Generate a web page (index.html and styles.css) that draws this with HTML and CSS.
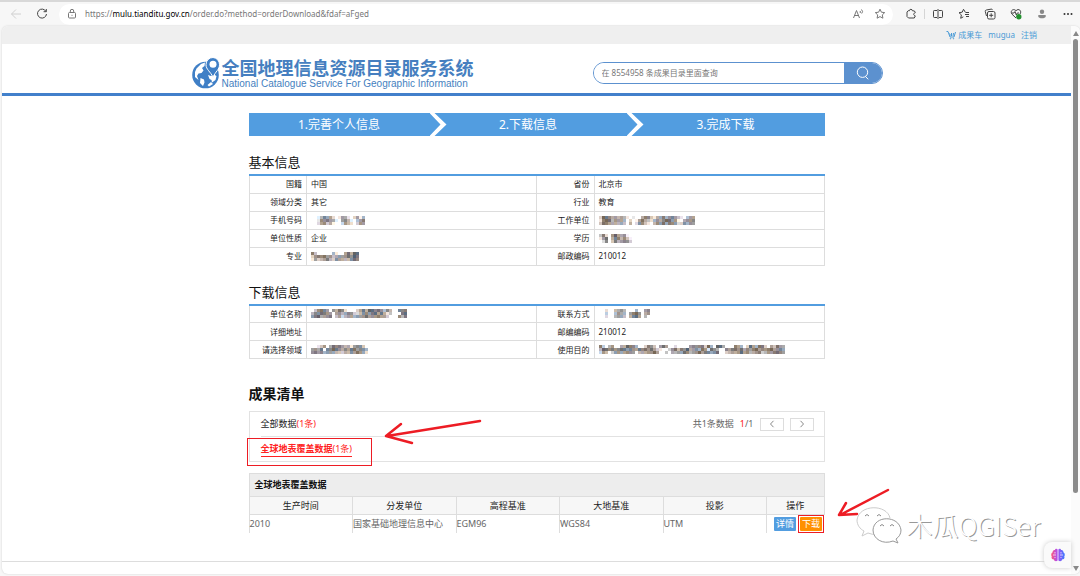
FILE: index.html
```html
<!DOCTYPE html>
<html lang="zh-CN">
<head>
<meta charset="utf-8">
<title>全国地理信息资源目录服务系统</title>
<link rel="stylesheet" href="styles.css">
</head>
<body>
<div class="browser">
  <div class="toolbar">
    <button class="tool" aria-label="Back"><svg width="12" height="12" viewBox="0 0 12 12" class="line faint"><path d="M11 6H1.500M6 1.500L1.500 6L6 10.500"/></svg></button>
    <button class="tool reload" aria-label="Reload"><svg width="12" height="12" viewBox="0 0 12 12" class="line"><path d="M10 3.500A4.500 4.500 0 1 0 10.500 6M10.300 1v2.700H7.600"/></svg></button>
    <div class="address">
      <svg width="10" height="10" viewBox="0 0 10 10" class="line gray"><rect x="1.500" y="3.500" width="7" height="5.500" rx="1"/><path d="M3.300 3.500V2a1.700 1.700 0 0 1 3.400 0v1.500"/><path d="M5 5.800v1"/></svg>
      <div class="url" role="textbox" aria-label="Address">https://<b>mulu.tianditu.gov.cn</b>/order.do?method=orderDownload&amp;fdaf=aFged</div>
      <button class="tool" aria-label="Read aloud"><svg width="12" height="12" viewBox="0 0 12 12" class="line gray"><path d="M1.500 10L4.500 2.500L7.500 10M2.500 7.500h4M8 3q1 1 0 2M9.500 1.500q2 2 .2 4"/></svg></button>
      <button class="tool" aria-label="Favorite"><svg width="12" height="12" viewBox="0 0 12 12" class="line gray"><path d="M6 1.200l1.400 3 3.300.4-2.400 2.300.6 3.300L6 8.600l-2.900 1.600.6-3.300L1.300 4.600l3.300-.4z"/></svg></button>
    </div>
    <div class="tools">
      <button class="tool" aria-label="Extensions"><svg width="12" height="12" viewBox="0 0 12 12" class="line"><path d="M4.500 2.700a1.400 1.400 0 0 1 2.800 0L9.500 3l.8 1.700-1 .5a1.300 1.300 0 0 0 0 2.200l1 .5L9.300 10H3.500L2 8.500V4l1.200-1.300z"/></svg></button>
      <span class="split"></span>
      <button class="tool" aria-label="Split screen"><svg width="12" height="12" viewBox="0 0 12 12" class="line"><path d="M5 2.500H2.300a.8.8 0 0 0-.8.800v5.400c0 .5.300.8.800.8H5M7 2.500h2.700c.5 0 .8.300.8.800v5.400c0 .5-.3.800-.8.800H7M6 1v10"/></svg></button>
      <button class="tool" aria-label="Favorites"><svg width="12" height="12" viewBox="0 0 12 12" class="line"><path d="M7.300 4.200L5.500 1.300 4.200 4.200 1 4.700l2.400 2.200-.7 3.400 2.600-1.500M7.500 4.500H11M7 6.500h4M8 8.500h3"/></svg></button>
      <button class="tool" aria-label="Collections"><svg width="12" height="12" viewBox="0 0 12 12" class="line"><rect x="3.500" y="3.500" width="7.500" height="7.500" rx="1.500"/><path d="M2.500 8L1.300 3.500q-.3-1.200 1-1.500l5-.9q1 0 1.200 1M7.200 5.300v4M5.200 7.300h4"/></svg></button>
      <button class="tool" aria-label="Browser essentials"><svg width="12" height="12" viewBox="0 0 12 12" class="line"><path d="M6 10L2 6.200C-.5 3.200 3.500-.3 6 2.800 8.500-.3 12.300 3 10 6M2 5h2l1-1.500L6.300 7l1-2H9"/><circle cx="8.800" cy="8.700" r="2.700" class="ok"/></svg></button>
      <button class="tool" aria-label="Profile"><svg width="12" height="12" viewBox="0 0 12 12" class="person"><circle cx="6" cy="3.700" r="2.200"/><path d="M2.300 7h7.400v1.200C9.700 11 2.300 11 2.300 8.200z"/></svg></button>
      <button class="tool" aria-label="Menu"><svg width="12" height="12" viewBox="0 0 12 12" class="dots"><circle cx="2.500" cy="6" r="1"/><circle cx="6" cy="6" r="1"/><circle cx="9.500" cy="6" r="1"/></svg></button>
    </div>
  </div>

  <div class="window">
    <div class="page">
      <nav class="topbar">
        <a href="#cart"><svg width="10" height="10" viewBox="0 0 10 10" class="cart"><path d="M.5 1.500H2L4 7h4l1.500-5M3.500 3.500l1 2M5.500 3v3M7.500 3L7 6"/><circle cx="4.500" cy="8.700" r=".3"/><circle cx="7.500" cy="8.700" r=".3"/></svg>成果车</a>
        <a href="#user">mugua</a>
        <a href="#logout">注销</a>
      </nav>
      <header class="header">
        <div class="masthead">
          <a class="logo" href="#home">
            <svg width="28" height="32" viewBox="0 0 28 32">
              <circle cx="13.500" cy="18" r="13.300" fill="#3f7fc6"/>
              <path d="M4.500 11.500L9 7l4-1.500-.5 3.500L10 11l1.500 2.500-2 2.500-3 .5L5 19l1.500 4L3 20v-5zM16 18l3 1 3-1.500 2.500 1.500-1 4-3.500 2.500-.5-2.500-2-1zM8.500 21l3.500 1.500.5 3-1.500 3.500-3-3zM21 27l-4 2.500-1.500-1.500L19 25z" fill="#fff"/>
              <path d="M21 .5a7 7 0 0 1 6.500 7.200c0 4.800-4 7-6.500 12.300C18.500 14.700 14 12.500 14 7.700A7 7 0 0 1 21 .5z" fill="#3f7fc6" stroke="#fff" stroke-width="1"/>
              <circle cx="21" cy="7.300" r="3.500" fill="#fff"/>
            </svg>
            <span class="names"><strong>全国地理信息资源目录服务系统</strong><span>National Catalogue Service For Geographic Information</span></span>
          </a>
          <form class="search">
            <input type="text" aria-label="查询" placeholder="在 8554958 条成果目录里面查询">
            <button type="button" aria-label="搜索"><svg width="14" height="14" viewBox="0 0 14 14"><circle cx="6.500" cy="6.200" r="5.200"/><path d="M9.500 10.500l2.700 2.800"/></svg></button>
          </form>
        </div>
      </header>

      <main class="content">
        <ol class="steps">
          <li>1.完善个人信息</li>
          <li>2.下载信息</li>
          <li>3.完成下载</li>
        </ol>

        <h2>基本信息</h2>
        <table class="info">
          <tr><th>国籍</th><td>中国</td><th>省份</th><td>北京市</td></tr>
          <tr><th>领域分类</th><td>其它</td><th>行业</th><td>教育</td></tr>
          <tr><th>手机号码</th><td><svg class="mosaic" data-rows="0016a7830287204816,002a9b87108a61058b,0038a4710039630498"></svg></td><th>工作单位</th><td><svg class="mosaic" data-rows="4dba78686202007ba5277b69a8520588,2bdc6988604018c753697adc8910799a,5cb87767507039a5206a8c7ba8349698"></svg></td></tr>
          <tr><th>单位性质</th><td>企业</td><th>学历</th><td><svg class="mosaic" data-rows="5b309d87910,28c07ab6a51,03a05b68a94"></svg></td></tr>
          <tr><th>专业</th><td><svg class="mosaic" data-rows="b50000062008c7dc,49bac8957889c9db,28468b64987669ca"></svg></td><th>邮政编码</th><td>210012</td></tr>
        </table>

        <h2>下载信息</h2>
        <table class="info">
          <tr><th>单位名称</th><td><svg class="mosaic" data-rows="05aca8097ca300048b7dcac95a600aab,6a9cb9808967a94369a8bc8b725000bc,8bd789b05836886889c899b884000a6b"></svg></td><th>联系方式</th><td><svg class="mosaic" data-rows="0030067960006008a0,00400597608bd90790,00300687507ac80600"></svg></td></tr>
          <tr><th>详细地址</th><td></td><th>邮编编码</th><td>210012</td></tr>
          <tr><th>请选择领域</th><td><svg class="mosaic" data-rows="0025907cab86728a950,897b0aadb97a8bc8a96,9b8a68876547698c973"></svg></td><th>使用目的</th><td><svg class="mosaic" data-rows="b40690077dba6004b9508c800300008a9ab4d60dc7000b8604c86cb4085c87,6dcab9acb8a98bac9c8420049c6b9d7896c92c9600a8bc9c7a8bd8a9bd89a7,396048978a98067799d800507687ca689d8ba79c0046879c8a679b4698bca8"></svg></td></tr>
        </table>

        <h1>成果清单</h1>
        <section class="groups">
          <div class="group">
            <a href="#all">全部数据<em>(1条)</em></a>
            <div class="pager">共1条数据 <span><em>1</em>/1</span>
              <button aria-label="上一页"><svg width="8" height="8" viewBox="0 0 8 8"><path d="M5.500.8L2.500 4l3 3.200"/></svg></button>
              <button aria-label="下一页"><svg width="8" height="8" viewBox="0 0 8 8"><path d="M2.500.8L5.500 4l-3 3.200"/></svg></button>
            </div>
          </div>
          <div class="group">
            <a class="active" href="#cover"><b>全球地表覆盖数据</b>(1条)</a>
          </div>
          <span class="mark mark-group"></span>
        </section>

        <table class="results">
          <caption>全球地表覆盖数据</caption>
          <thead><tr><th>生产时间</th><th>分发单位</th><th>高程基准</th><th>大地基准</th><th>投影</th><th class="ops">操作</th></tr></thead>
          <tbody><tr><td>2010</td><td>国家基础地理信息中心</td><td>EGM96</td><td>WGS84</td><td>UTM</td>
            <td class="ops"><div class="actions"><button class="detail">详情</button><button class="download">下载<span class="mark mark-download"></span></button></div></td></tr></tbody>
        </table>

        <svg class="arrow arrow-group" width="100" height="30" viewBox="0 0 100 30"><path d="M97 4L4 19M18 7L3 19M3 19L29 26"/></svg>
        <div class="watermark">
          <svg width="48" height="40" viewBox="0 0 48 40">
            <g fill="#fff"><path stroke="#ccc" d="M34 13C31-1 3-1 1 15c0 5 3 9 7 11l-2 5 6-3q4 2 9 1"/><path d="M17 25c1-15 26-15 28 0 0 4-2 7-5 9l2 4-5-2C27 40 17 34 17 25z" stroke="#999"/></g>
            <g fill="none" stroke="#888"><path d="M9 11q2-3 4 0M21 11q2-3 4 0M24 21q2-3 4 0M34 21q2-3 4 0"/></g>
          </svg><span>木瓜QGISer</span>
        </div>
        <svg class="arrow arrow-download" width="56" height="32" viewBox="0 0 56 32"><path d="M52 4L4 29M10 17L3 29M3 29L21 28"/></svg>
      </main>
      <footer class="footer"></footer>
      <button class="assistant" aria-label="Assistant"><svg width="14" height="14" viewBox="0 0 14 14">
        <defs><linearGradient id="brain"><stop offset="0" stop-color="#ff5a7a"/><stop offset=".45" stop-color="#b04cf0"/><stop offset="1" stop-color="#3c7cff"/></linearGradient></defs>
        <path fill="url(#brain)" d="M6.600 1.500v11C5 14 3 13 3 11.500 1 11.500 0 10 .8 8.500-.3 7 .3 5 1.500 4.500 1.500 2.500 3 2 3.800 2 4.500.3 6 .5 6.600 1.500zM7.400 1.500v11c1.600 1.500 3.600.5 3.600-1 2 0 3-1.500 2.200-3 1.100-1.500.5-3.500-.7-4 0-2-1.500-2.500-2.300-2.500C9.500.3 8 .5 7.400 1.500z"/>
        <path d="M2 7h3M9 7h3M4 4v1.500M10 4v1.500M4 10V9M10 10V9" stroke="#fff" stroke-width=".7"/></svg></button>
    </div>
    <div class="scrollbar"><i class="up"></i><i class="thumb"></i><i class="down"></i></div>
  </div>
</div>
<script src="mosaic.js"></script>
</body>
</html>
```
FILE: mosaic.js
```js
// Draws masked values as blocks: each hex digit is the darkness of one cell.
const cell = 3;
const tints = [[0, 0, 0], [20, 4, -14], [-20, -2, 18], [4, -4, 6], [14, 0, -8]];
document.querySelectorAll('.mosaic').forEach((svg) => {
  const rows = svg.dataset.rows.split(',');
  svg.setAttribute('width', rows[0].length * cell);
  svg.setAttribute('height', rows.length * cell);
  rows.forEach((row, y) => {
    [...row].forEach((digit, x) => {
      const level = parseInt(digit, 16);
      if (!level) return;
      const base = 255 - level * 12;
      const rgb = tints[(x * 3 + y * 2 + level) % tints.length].map((t) => Math.min(255, base + t));
      const rect = document.createElementNS('http://www.w3.org/2000/svg', 'rect');
      rect.setAttribute('x', x * cell);
      rect.setAttribute('y', y * cell);
      rect.setAttribute('width', cell);
      rect.setAttribute('height', cell);
      rect.setAttribute('fill', `rgb(${rgb})`);
      svg.append(rect);
    });
  });
});
```
FILE: styles.css
```css
* { box-sizing: border-box; }
body {
  margin: 0;
  font: 9px/12px "Noto Sans", "Noto Sans CJK SC", sans-serif;
  color: #222;
  background: #f7f7f7;
}
button { padding: 0; border: 0; background: none; font: inherit; color: inherit; display: grid; place-items: center; }
a { color: inherit; text-decoration: none; }
em { font-style: normal; color: #f22; }
svg { display: block; flex: none; }

.browser { display: flex; flex-direction: column; min-height: 100vh; padding: 0 0 2px 2px; border-top: 2px solid #d8d8d8; }
.toolbar { display: flex; align-items: center; height: 24px; padding: 0 5px 0 7px; }
.tool { width: 14px; height: 20px; }
.reload { margin: 0 10px 0 12px; }
.line { fill: none; stroke: #444; stroke-width: 1; }
.faint { stroke: #d0d0d0; }
.gray { stroke: #777; }
.ok { fill: #23912f; stroke: none; }
.person { fill: #888; }
.dots { fill: #333; }
.address { display: flex; align-items: center; flex: 1; height: 21px; gap: 8px; padding: 0 6px 0 8px; border-radius: 11px; background: #fff; }
.url { flex: 1; font-size: 8px; color: #777; }
.url b { font-weight: 400; color: #000; }
.tools { display: flex; align-items: center; gap: 12px; margin-left: 11px; }
.split { width: 1px; height: 10px; background: #d5d5d5; margin: 0 -6px; }

.window { display: flex; flex: 1; background: #fff; border-radius: 6px; overflow: hidden; box-shadow: 0 0 2px #ccc; }
.page { position: relative; display: flex; flex-direction: column; flex: 1; }
.topbar { display: flex; align-items: center; justify-content: flex-end; gap: 6px; height: 18px; padding-right: 34px; background: #efefef; font-size: 8px; color: #4a9ad6; }
.topbar a { display: flex; align-items: center; gap: 2px; }
.cart { fill: none; stroke: #4a9ad6; stroke-width: 1; }
.header { border-bottom: 3px solid #4280cb; }
.masthead { display: flex; align-items: center; justify-content: space-between; width: 100%; max-width: 692px; height: 49px; margin: 0 auto; padding: 8px 0 0 1px; }
.logo { display: flex; align-items: center; gap: 2px; color: #467fc0; }
.names { display: flex; flex-direction: column; font: 10px/12px "Liberation Sans", Arial, sans-serif; }
.names strong { font: 700 18px/22px "Noto Sans CJK SC", sans-serif; }
.search { display: flex; width: 290px; height: 22px; border: 1px solid #5c91cf; border-radius: 11px; overflow: hidden; }
.search input { flex: 1; min-width: 0; border: 0; outline: 0; padding: 1px 8px 0; font: inherit; font-size: 8px; background: #fff; }
.search input::placeholder { color: #777; opacity: 1; }
.search button { width: 38px; background: #5c91cf; }
.search svg { fill: none; stroke: #fff; stroke-width: 1; }

.content { position: relative; width: 100%; max-width: 576px; margin: 17px auto 0; }
.steps { display: grid; grid-template-columns: 189fr 197fr 190fr; margin: 0 0 18px; padding: 0; list-style: none; color: #fff; background: #529de0; font-size: 12px; line-height: 23px; }
.steps li { position: relative; text-align: center; padding-right: 8px; }
.steps li:nth-child(2) { padding-right: 16px; }
.steps li + li::before { content: ""; position: absolute; left: -8px; top: 0; width: 17px; height: 23px; background: #fff; clip-path: polygon(0 0, 5px 0, 17px 50%, 5px 100%, 0 100%, 11px 50%); }
h1, h2 { margin: 0; color: #111; }
h2 { font-size: 13px; line-height: 16px; font-weight: 400; margin-bottom: 4px; }
h1 { font-size: 14px; line-height: 18px; margin-bottom: 8px; }
table { width: 100%; table-layout: fixed; border-collapse: collapse; }
.info { margin-bottom: 18px; font-size: 8px; line-height: 10px; }
.info th, .info td { height: 18px; padding: 0 4px; border: 1px solid #ddd; font-weight: 400; text-align: left; }
.info tr:first-child > * { border-top: 2px solid #529de0; }
.info th { width: 10%; text-align: right; }
.info + h1 { margin-top: 26px; }

.groups { position: relative; border: 1px solid #e2e2e2; margin-bottom: 11px; padding-left: 11px; }
.group { display: flex; align-items: center; justify-content: space-between; height: 24px; padding-right: 10px; }
.group + .group { height: 25px; border-top: 1px solid #e2e2e2; }
.active { color: #f22; border-bottom: 1px solid #f22; line-height: 14px; }
.pager { display: flex; align-items: center; gap: 6px; color: #666; }
.pager button { width: 24px; height: 13px; border: 1px solid #ddd; background: #fff; }
.pager svg { fill: none; stroke: #888; stroke-width: 1; }
.mark { position: absolute; border: 1px solid #ed1c24; pointer-events: none; }
.mark-group { left: -3px; top: 26px; width: 125px; height: 28px; }

caption { height: 23px; padding-left: 5px; border: 1px solid #ddd; border-bottom: 0; background: #ededed; color: #111; font-weight: 700; line-height: 22px; text-align: left; }
.results th { height: 18px; padding: 0; border: 1px solid #ddd; background: #f7f7f7; font-weight: 400; line-height: 16px; }
.results td { height: 18px; padding: 0; border-left: 1px solid #ddd; color: #666; }
.results .ops { width: 10%; }
.actions { display: flex; justify-content: flex-end; gap: 4px; padding-right: 2px; color: #fff; }
.actions button { position: relative; width: 22px; height: 14px; border-radius: 1px; }
.detail { background: #529de0; }
.download { background: #ff9000; }
.mark-download { inset: -2px; }

.arrow { position: absolute; fill: none; stroke: #ed1c24; stroke-width: 2.5; stroke-linecap: round; }
.arrow-group { left: 134px; top: 304px; }
.arrow-download { left: 587px; top: 373px; }
.watermark { position: absolute; left: 607px; top: 392px; display: flex; align-items: center; gap: 3px; font: 300 26px/40px "Noto Sans CJK SC", sans-serif; color: #fff; text-shadow: 1px 1px 0 #999; white-space: nowrap; }
.footer { margin-top: auto; height: 13px; border-top: 1px solid #ddd; }
.assistant { position: absolute; right: 0; bottom: 6px; width: 27px; height: 26px; border-radius: 8px 0 0 8px; background: #fafafa; box-shadow: 0 0 5px #ccc; }

.scrollbar { display: flex; flex-direction: column; align-items: center; width: 9px; padding: 5px 0 3px; background: #fbfbfb; }
.scrollbar i { width: 5px; }
.up { border: 3px solid transparent; border-top: 0; border-bottom: 5px solid #888; }
.thumb { flex: 0 1 84%; margin-top: 3px; border-radius: 3px; background: #8b8b8b; }
.down { margin-top: auto; border: 3px solid transparent; border-bottom: 0; border-top: 5px solid #888; }
```
